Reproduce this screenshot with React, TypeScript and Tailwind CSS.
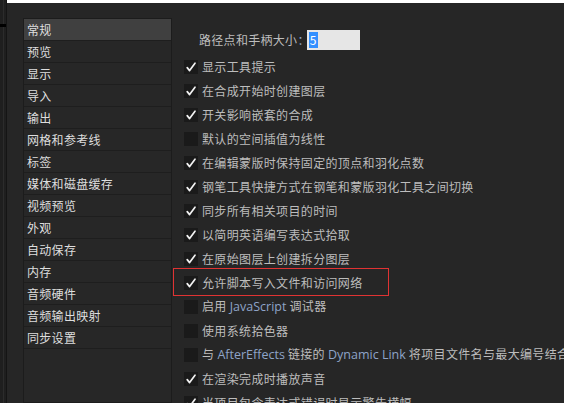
import React from 'react';

const cjk = { fontFamily: '"Noto Sans CJK SC", "Noto Sans", sans-serif' };

const categories = [
  '常规',
  '预览',
  '显示',
  '导入',
  '输出',
  '网格和参考线',
  '标签',
  '媒体和磁盘缓存',
  '视频预览',
  '外观',
  '自动保存',
  '内存',
  '音频硬件',
  '音频输出映射',
  '同步设置',
];

type Part = string | { latin: string };

interface Option {
  checked: boolean;
  label: Part[];
  highlight?: boolean;
}

const options: Option[] = [
  { checked: true, label: ['显示工具提示'] },
  { checked: true, label: ['在合成开始时创建图层'] },
  { checked: true, label: ['开关影响嵌套的合成'] },
  { checked: false, label: ['默认的空间插值为线性'] },
  { checked: true, label: ['在编辑蒙版时保持固定的顶点和羽化点数'] },
  { checked: true, label: ['钢笔工具快捷方式在钢笔和蒙版羽化工具之间切换'] },
  { checked: true, label: ['同步所有相关项目的时间'] },
  { checked: true, label: ['以简明英语编写表达式拾取'] },
  { checked: true, label: ['在原始图层上创建拆分图层'] },
  { checked: true, label: ['允许脚本写入文件和访问网络'], highlight: true },
  { checked: false, label: ['启用 ', { latin: 'JavaScript' }, ' 调试器'] },
  { checked: false, label: ['使用系统拾色器'] },
  {
    checked: false,
    label: ['与 ', { latin: 'AfterEffects' }, ' 链接的 ', { latin: 'Dynamic Link' }, ' 将项目文件名与最大编号结合使用'],
  },
  { checked: true, label: ['在渲染完成时播放声音'] },
  { checked: true, label: ['当项目包含表达式错误时显示警告横幅'] },
];

function Checkbox({ checked }: { checked: boolean }) {
  return (
    <span className="flex h-[14px] w-[14px] shrink-0 items-center justify-center bg-[#1a1a1a]">
      {checked && (
        <svg width="12" height="12" viewBox="0 0 12 12">
          <path d="M2.2 6.6 L4.6 9.6 L10 2.2" fill="none" stroke="#f2f2f2" strokeWidth="1.7" strokeLinecap="round" strokeLinejoin="round" />
        </svg>
      )}
    </span>
  );
}

export default function App() {
  return (
    <div className="relative h-[403px] w-[564px] overflow-hidden bg-[#262626]" style={cjk}>
      <div className="flex h-full">
        {/* Window edge strip */}
        <div className="relative w-[7px] shrink-0 bg-[#1f1f1f] border-r border-[#151515]">
          <div className="absolute left-[3px] top-0 h-full w-px bg-[#2c2c2c]" />
          <div className="absolute left-0 top-[24px] h-[3px] w-[6px] bg-black" />
        </div>

        <div className="flex min-w-0 flex-1 flex-col">
          <div className="h-[3px] bg-white" />
          <div className="flex min-h-0 flex-1 pl-[16px] pt-[15px]">
            {/* Category list */}
            <ul className="w-[149px] shrink-0 border border-[#1c1c1c] bg-[#272727]">
              {categories.map((c, i) => (
                <li
                  key={c}
                  className={`flex h-[22px] items-center border-b border-[#1e1e1e] pl-[3px] text-[12px] leading-none tracking-[0.3px] text-[#dedede] ${
                    i === 0 ? 'bg-[#404040]' : ''
                  }`}
                >
                  {c}
                </li>
              ))}
            </ul>

            {/* Options */}
            <div className="min-w-0 flex-1 pl-[12px] pt-[12px]">
              <div className="flex h-[20px] items-center pl-[15px] text-[12px] tracking-[0.3px] text-[#bdbdbd]">
                <span>路径点和手柄大小</span>
                <span className="text-[#8ea4c8]">：</span>
                <span className="-ml-[3px] flex h-[20px] w-[53px] items-center bg-[#e6e6e6] pl-[2px]">
                  <span className="flex h-[16px] items-center bg-[#3390ff] px-[1px] text-[12px] leading-none text-white">5</span>
                </span>
              </div>
              <div className="pt-[5px]">
                {options.map((o, i) => (
                  <div key={i} className="relative flex h-[24px] items-center gap-[4px] whitespace-nowrap">
                    {o.highlight && (
                      <span className="absolute -left-[11px] -top-[3px] h-[28px] w-[216px] border border-[#e03333]" />
                    )}
                    <Checkbox checked={o.checked} />
                    <span className="text-[12px] leading-none tracking-[0.35px] text-[#bdbdbd]">
                      {o.label.map((p, j) =>
                        typeof p === 'string' ? (
                          <span key={j}>{p}</span>
                        ) : (
                          <span
                            key={j}
                            className="text-[12.5px] tracking-normal text-[#8ea4c8]"
                            style={{ fontFamily: '"Open Sans", "Noto Sans", sans-serif' }}
                          >
                            {p.latin}
                          </span>
                        )
                      )}
                    </span>
                  </div>
                ))}
              </div>
            </div>
          </div>
        </div>
      </div>
    </div>
  );
}
